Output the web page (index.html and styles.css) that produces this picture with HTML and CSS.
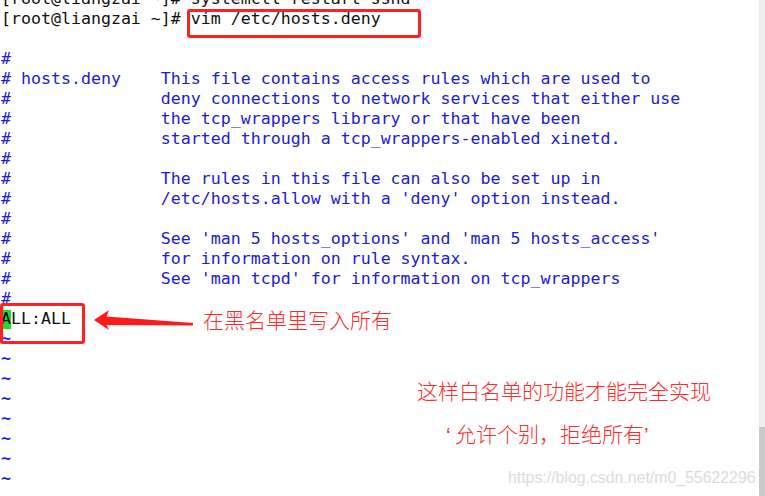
FILE: index.html
```html
<!DOCTYPE html>
<html>
<head>
<meta charset="utf-8">
<link rel="stylesheet" href="styles.css">
</head>
<body>
<div class="screen">
  <div class="terminal">
    <div class="lines">
<div class="line prompt">[root@liangzai ~]# systemctl restart sshd</div>
<div class="line prompt">[root@liangzai ~]# vim /etc/hosts.deny</div>
<div class="line"> </div>
<div class="line cm">#</div>
<div class="line cm"># hosts.deny    This file contains access rules which are used to</div>
<div class="line cm">#               deny connections to network services that either use</div>
<div class="line cm">#               the tcp_wrappers library or that have been</div>
<div class="line cm">#               started through a tcp_wrappers-enabled xinetd.</div>
<div class="line cm">#</div>
<div class="line cm">#               The rules in this file can also be set up in</div>
<div class="line cm">#               /etc/hosts.allow with a 'deny' option instead.</div>
<div class="line cm">#</div>
<div class="line cm">#               See 'man 5 hosts_options' and 'man 5 hosts_access'</div>
<div class="line cm">#               for information on rule syntax.</div>
<div class="line cm">#               See 'man tcpd' for information on tcp_wrappers</div>
<div class="line cm">#</div>
<div class="line"><span class="cursor">A</span>LL:ALL</div>
<div class="line tilde">~</div>
<div class="line tilde">~</div>
<div class="line tilde">~</div>
<div class="line tilde">~</div>
<div class="line tilde">~</div>
<div class="line tilde">~</div>
<div class="line tilde">~</div>
<div class="line tilde">~</div>
    </div>

    <div class="box box-cmd"></div>
    <div class="box box-rule"></div>
    <svg class="arrow" width="104" height="26" viewBox="0 0 104 26">
      <polygon points="1,12 16,2 13.5,8.5 100,15 100,17.5 13.5,17 16,22" fill="#ff1a1a"/>
    </svg>
    <div class="note note-black">在黑名单里写入所有</div>
    <div class="note note-white">这样白名单的功能才能完全实现</div>
    <div class="note note-quote"><span class="q">‘</span>允许个别，拒绝所有<span class="q">’</span></div>
    <div class="watermark">https://blog.csdn.net/m0_55622296</div>
  </div>
  <div class="scrollbar"><div class="thumb"></div></div>
</div>
</body>
</html>
```

FILE: styles.css
```css
html, body {
  margin: 0;
  padding: 0;
  background: #ffffff;
}

.screen {
  width: 765px;
  height: 496px;
  display: flex;
  overflow: hidden;
}

.terminal {
  position: relative;
  flex: 1;
  height: 496px;
  overflow: hidden;
  background: #ffffff;
}

.lines {
  margin-top: -11px;
  padding-left: 1px;
  font-family: "DejaVu Sans Mono", monospace;
  font-size: 16.6px;
  line-height: 20px;
  color: #111111;
}

.line {
  height: 20px;
  white-space: pre;
}

.prompt {
  color: #111111;
}

.cm {
  color: #2020cc;
}

.tilde {
  color: #1c1cf0;
  font-weight: bold;
}

.cursor {
  display: inline-block;
  vertical-align: top;
  width: 10px;
  height: 19px;
  margin-top: 1px;
  line-height: 18px;
  background: #22dd22;
  color: #000000;
}

.box {
  position: absolute;
  border: 3px solid #ff2020;
  border-radius: 3px;
  box-sizing: border-box;
}

.box-cmd {
  left: 187px;
  top: 9px;
  width: 234px;
  height: 29px;
}

.box-rule {
  left: 0px;
  top: 303px;
  width: 85px;
  height: 41px;
}

.arrow {
  position: absolute;
  left: 93px;
  top: 308px;
}

.note {
  position: absolute;
  font-family: "Noto Sans CJK SC", "Microsoft YaHei", sans-serif;
  color: #ff2a2a;
  font-weight: 300;
  white-space: nowrap;
  line-height: 1;
}

.note-black {
  left: 203px;
  top: 309px;
  font-size: 21px;
}

.note-white {
  left: 417px;
  top: 380px;
  font-size: 21px;
}

.note-quote {
  left: 446px;
  top: 423px;
  font-size: 21px;
}

.q {
  font-family: "Liberation Sans", Arial, sans-serif;
  display: inline-block;
  width: 9px;
}

.watermark {
  position: absolute;
  left: 508px;
  top: 469px;
  font-family: "Liberation Sans", Arial, sans-serif;
  font-size: 15.85px;
  color: #dcdcdc;
  white-space: nowrap;
}

.scrollbar {
  width: 6px;
  height: 496px;
  background: #efefef;
  display: flex;
  flex-direction: column;
  justify-content: flex-end;
}

.thumb {
  height: 69px;
  background: #c9c9c9;
}
```
